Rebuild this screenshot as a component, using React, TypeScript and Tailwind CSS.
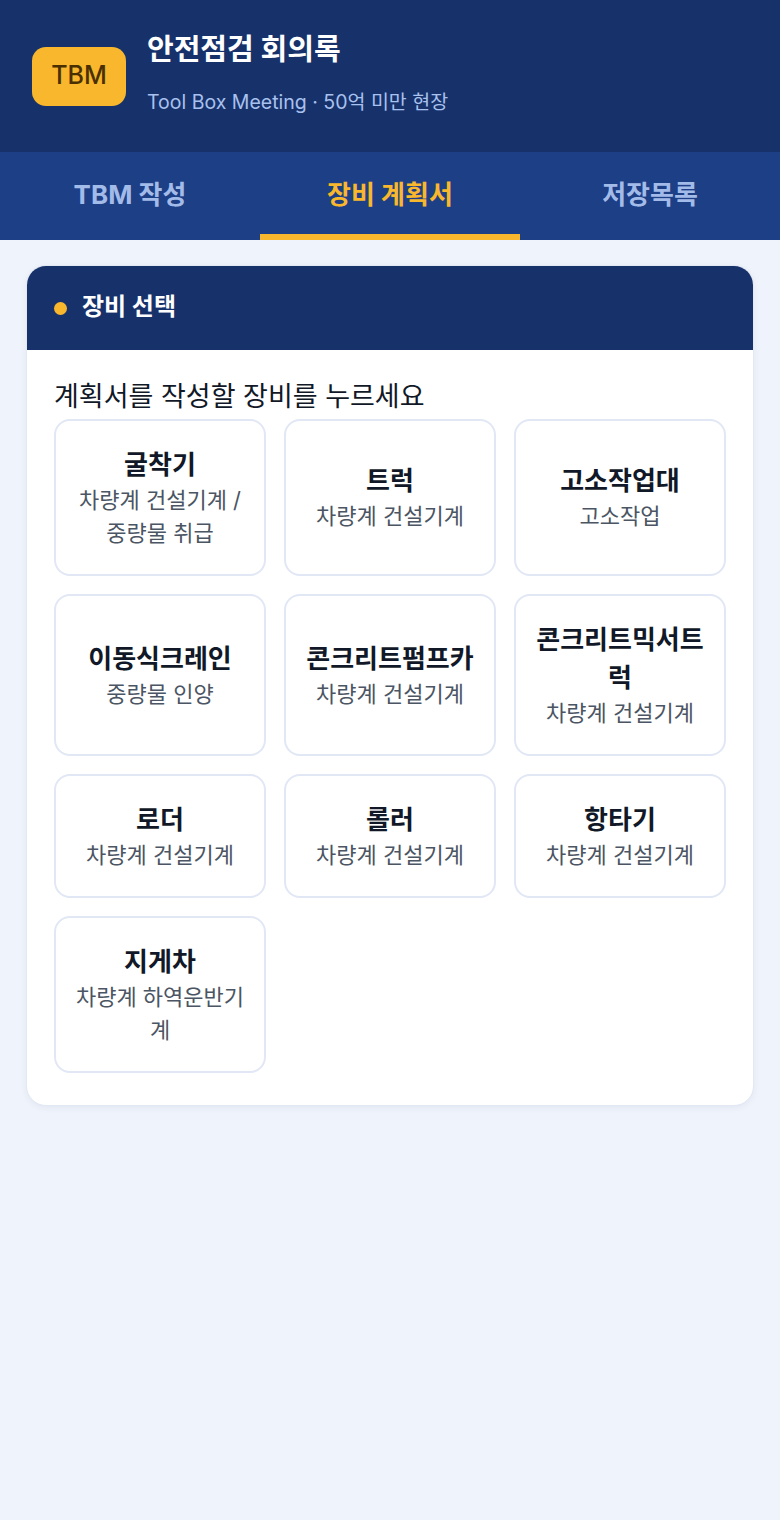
import React from "react";

type Equipment = { name: string; desc: string };

const equipments: Equipment[] = [
  { name: "굴착기", desc: "차량계 건설기계 / 중량물 취급" },
  { name: "트럭", desc: "차량계 건설기계" },
  { name: "고소작업대", desc: "고소작업" },
  { name: "이동식크레인", desc: "중량물 인양" },
  { name: "콘크리트펌프카", desc: "차량계 건설기계" },
  { name: "콘크리트믹서트럭", desc: "차량계 건설기계" },
  { name: "로더", desc: "차량계 건설기계" },
  { name: "롤러", desc: "차량계 건설기계" },
  { name: "항타기", desc: "차량계 건설기계" },
  { name: "지게차", desc: "차량계 하역운반기계" },
];

const tabs = ["TBM 작성", "장비 계획서", "저장목록"];

const font = { fontFamily: 'Inter, "Noto Sans CJK KR", sans-serif' };

export default function App() {
  const active = 1;

  return (
    <div className="min-h-[1520px] w-full bg-[#eff3fb]" style={font}>
      {/* header */}
      <header className="flex h-[152px] items-center gap-[21px] bg-[#17326b] pl-[32px]">
        <div className="flex h-[59px] w-[94px] items-center justify-center rounded-[14px] bg-[#f8b72c] text-[25px] font-medium text-[#4a3000]">
          TBM
        </div>
        <div className="flex flex-col pb-[5px]">
          <h1 className="text-[29px] font-bold leading-[36px] text-white">안전점검 회의록</h1>
          <p className="mt-[21px] text-[19.5px] leading-[26px] text-[#a9c1ee]">
            Tool Box Meeting · 50억 미만 현장
          </p>
        </div>
      </header>

      {/* tabs */}
      <nav className="flex h-[88px] bg-[#1d3f86]">
        {tabs.map((t, i) => (
          <button
            key={t}
            className={
              i === active
                ? "flex flex-1 items-center justify-center border-b-[6px] border-[#f8b72c] pt-[2px] text-[26px] font-bold text-[#f8b72c]"
                : "flex flex-1 items-center justify-center border-b-[6px] border-transparent pt-[2px] text-[26px] font-bold text-[#a3bbe8]"
            }
          >
            {t}
          </button>
        ))}
      </nav>

      {/* card */}
      <section className="mx-[26px] mt-[25px] overflow-hidden rounded-[20px] border border-[#e2e8f4] bg-white shadow-[0_2px_6px_rgba(23,50,107,0.06)]">
        <div className="flex h-[84px] items-center gap-[15px] bg-[#17326b] pl-[27px]">
          <span className="h-[13px] w-[13px] rounded-full bg-[#f8b72c]" />
          <h2 className="pb-[2px] text-[24px] font-bold text-white">장비 선택</h2>
        </div>

        <div className="px-[27px] pb-[32px] pt-[30px]">
          <p className="text-[27px] leading-[34px] text-[#111827]">계획서를 작성할 장비를 누르세요</p>
          <div className="mt-[5px] grid grid-cols-3 gap-[18px]">
            {equipments.map((e) => (
              <button
                key={e.name}
                className="flex flex-col items-center justify-center rounded-[16px] border-2 border-[#e1e7f5] bg-white px-[14px] py-[24.5px] text-center"
              >
                <span className="text-[26px] font-bold leading-[38px] text-[#111827]">{e.name}</span>
                <span className="text-[22px] leading-[33px] text-[#4b5563]">{e.desc}</span>
              </button>
            ))}
          </div>
        </div>
      </section>
    </div>
  );
}
